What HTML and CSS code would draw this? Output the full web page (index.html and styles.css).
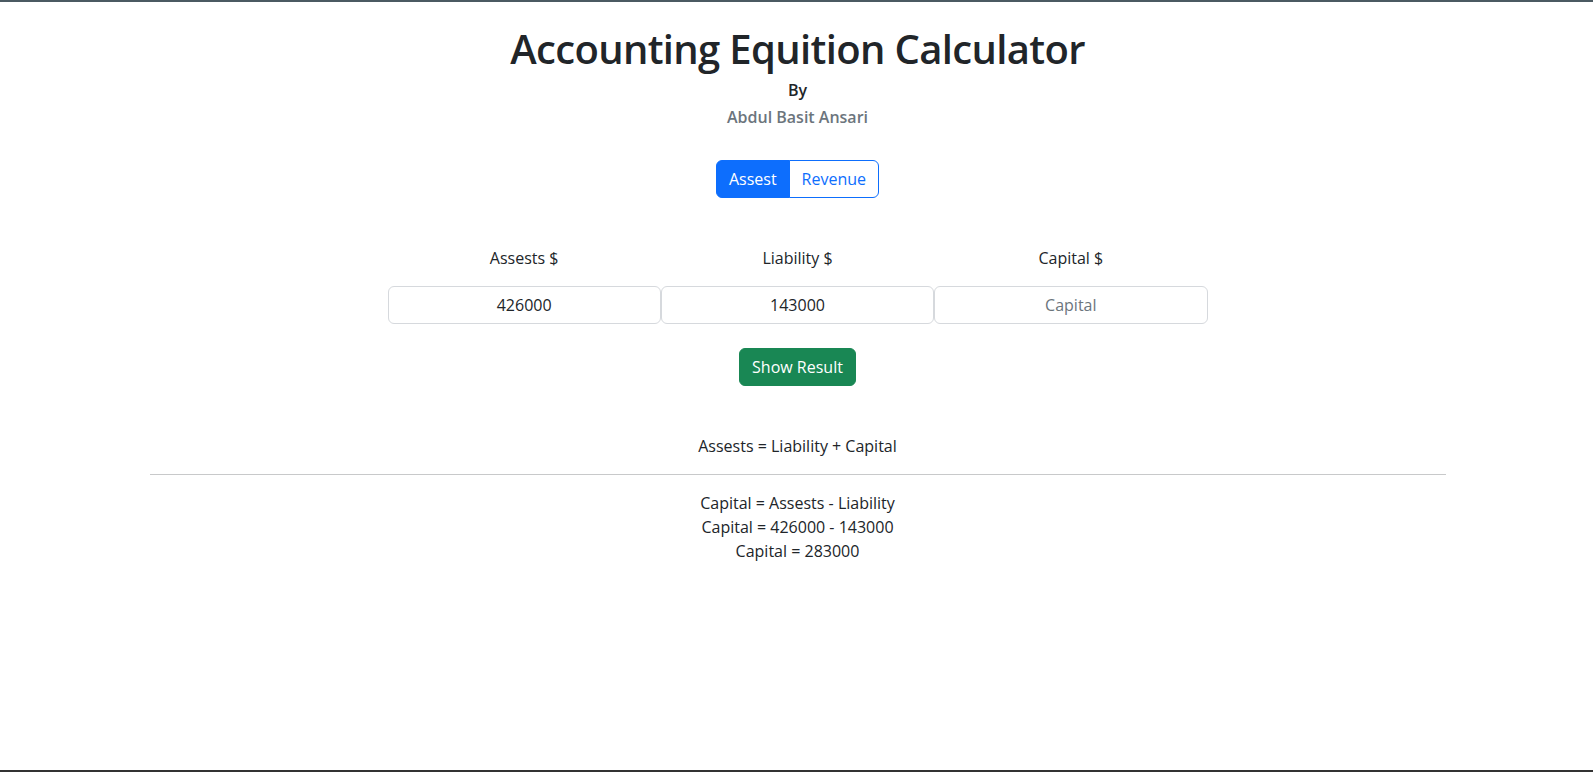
FILE: index.html
```html
<!DOCTYPE html>
<html lang="en">
<head>
<meta charset="utf-8">
<title>Accounting Equition Calculator</title>
<link rel="stylesheet" href="styles.css">
</head>
<body>
<div class="page">
  <main class="container">
    <h1 class="title">Accounting Equition Calculator</h1>
    <h6 class="by">By</h6>
    <h6 class="author">Abdul Basit Ansari</h6>

    <div class="toggle">
      <div class="btn-group">
        <button class="btn btn-primary">Assest</button>
        <button class="btn btn-outline">Revenue</button>
      </div>
    </div>

    <div class="fields">
      <div class="field">
        <label class="field-label">Assests $</label>
        <input class="field-input" type="text" value="426000" placeholder="Assests">
      </div>
      <div class="field">
        <label class="field-label">Liability $</label>
        <input class="field-input" type="text" value="143000" placeholder="Liability">
      </div>
      <div class="field">
        <label class="field-label">Capital $</label>
        <input class="field-input" type="text" value="" placeholder="Capital">
      </div>
    </div>

    <div class="actions">
      <button class="btn btn-success">Show Result</button>
    </div>

    <p class="formula">Assests = Liability + Capital</p>
    <hr class="divider">
    <div class="result">
      <p class="result-line">Capital = Assests - Liability</p>
      <p class="result-line">Capital = 426000 - 143000</p>
      <p class="result-line">Capital = 283000</p>
    </div>
  </main>
  <div class="bottom-rule"></div>
</div>
</body>
</html>
```

FILE: styles.css
```css
* {
  box-sizing: border-box;
}

html, body {
  margin: 0;
  padding: 0;
}

body {
  font-family: "Open Sans", "Noto Sans", "DejaVu Sans", sans-serif;
  font-size: 16px;
  line-height: 1.5;
  color: #212529;
  background: #fff;
}

.page {
  min-height: 774px;
  display: flex;
  flex-direction: column;
  border-top: 2px solid #4b5a62;
}

.container {
  flex: 1;
  width: 100%;
  max-width: 1320px;
  margin: 0 auto;
  padding: 23px 11px 0 13px;
  text-align: center;
}

.title {
  margin: 0 0 8px;
  font-size: 40px;
  line-height: 48px;
  font-weight: 600;
  letter-spacing: -0.65px;
}

.by,
.author {
  margin: 0 0 8px;
  font-size: 16px;
  line-height: 19.2px;
  font-weight: 600;
}

.author {
  color: #6c757d;
}

.toggle {
  margin-top: 33px;
  display: flex;
  justify-content: center;
}

.btn-group {
  display: inline-flex;
}

.btn {
  font-family: inherit;
  font-size: 16px;
  line-height: 24px;
  padding: 6px 12px;
  border: 1px solid transparent;
  border-radius: 6px;
  cursor: pointer;
  font-weight: 400;
}

.btn-primary {
  background: #0d6efd;
  border-color: #0d6efd;
  color: #fff;
}

.btn-outline {
  background: #fff;
  border-color: #0d6efd;
  color: #0d6efd;
}

.btn-group .btn:first-child {
  border-top-right-radius: 0;
  border-bottom-right-radius: 0;
}

.btn-group .btn:last-child {
  border-top-left-radius: 0;
  border-bottom-left-radius: 0;
  margin-left: -1px;
}

.btn-success {
  background: #198754;
  border-color: #198754;
  color: #fff;
}

.fields {
  width: 820px;
  margin: 48px auto 0;
  display: grid;
  grid-template-columns: repeat(3, 1fr);
}

.field {
  display: flex;
  flex-direction: column;
  align-items: stretch;
}

.field-label {
  display: block;
  line-height: 24px;
  margin-bottom: 16px;
}

.field-input {
  width: 100%;
  height: 38px;
  padding: 6px 12px;
  font-family: inherit;
  font-size: 16px;
  line-height: 24px;
  color: #212529;
  text-align: center;
  background: #fff;
  border: 1px solid #d6d9dd;
  border-radius: 6px;
  outline: none;
}

.field-input::placeholder {
  color: #6c757d;
  opacity: 1;
}

.actions {
  margin-top: 24px;
  display: flex;
  justify-content: center;
}

.formula {
  margin: 48px 0 0;
  line-height: 24px;
}

.divider {
  margin: 16px 0;
  border: 0;
  border-top: 1px solid #c8c9ca;
}

.result-line {
  margin: 0;
  line-height: 24px;
}

.bottom-rule {
  height: 2px;
  background: #333;
  margin-bottom: 2px;
}
```
